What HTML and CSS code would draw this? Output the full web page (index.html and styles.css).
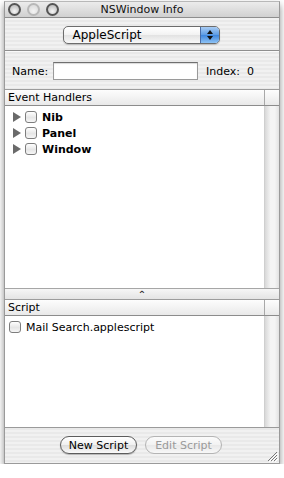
FILE: index.html
```html
<!DOCTYPE html>
<html lang="en">
<head>
    <meta charset="UTF-8">
    <title>NSWindow Info</title>
    <link rel="stylesheet" href="styles.css">
</head>
<body>
    <div class="window">
        <div class="titlebar">
            <div class="lights">
                <span class="light"></span>
                <span class="light off"></span>
                <span class="light"></span>
            </div>
            <div class="title">NSWindow Info</div>
        </div>

        <div class="content">
            <div class="popup-row">
                <div class="popup">
                    <span class="popup-label">AppleScript</span>
                    <span class="popup-arrows">
                        <svg width="8" height="12" viewBox="0 0 8 12">
                            <path d="M4 1 L7 5 L1 5 Z" fill="#111"/>
                            <path d="M4 11 L7 7 L1 7 Z" fill="#111"/>
                        </svg>
                    </span>
                </div>
            </div>
            <div class="separator"></div>

            <div class="name-row">
                <label class="name-label">Name:</label>
                <input class="name-field" type="text">
                <span class="index-label">Index:&nbsp; 0</span>
            </div>

            <div class="table events">
                <div class="table-header">
                    <div class="col">Event Handlers</div>
                    <div class="col-corner"></div>
                </div>
                <div class="table-body">
                    <div class="rows">
                        <div class="row">
                            <span class="disclosure"></span>
                            <span class="checkbox"></span>
                            <span class="row-text bold">Nib</span>
                        </div>
                        <div class="row">
                            <span class="disclosure"></span>
                            <span class="checkbox"></span>
                            <span class="row-text bold">Panel</span>
                        </div>
                        <div class="row">
                            <span class="disclosure"></span>
                            <span class="checkbox"></span>
                            <span class="row-text bold">Window</span>
                        </div>
                    </div>
                    <div class="scroll-track"></div>
                </div>
            </div>

            <div class="splitter"><span class="splitter-dot">&#8963;</span></div>

            <div class="table scripts">
                <div class="table-header">
                    <div class="col">Script</div>
                    <div class="col-corner"></div>
                </div>
                <div class="table-body">
                    <div class="rows">
                        <div class="row script-row">
                            <span class="checkbox"></span>
                            <span class="row-text">Mail Search.applescript</span>
                        </div>
                    </div>
                    <div class="scroll-track"></div>
                </div>
            </div>

            <div class="button-row">
                <button class="aqua-button">New Script</button>
                <button class="aqua-button disabled">Edit Script</button>
            </div>

            <svg class="grip" width="12" height="12" viewBox="0 0 12 12">
                <path d="M11 2 L2 11 M11 5 L5 11 M11 8 L8 11" stroke="#777" stroke-width="1"/>
                <path d="M12 3 L3 12 M12 6 L6 12 M12 9 L9 12" stroke="#fff" stroke-width="1"/>
            </svg>
        </div>
    </div>
</body>
</html>
```

FILE: styles.css
```css
body {
    margin: 0;
    padding: 0;
    background: #ffffff;
    font-family: 'DejaVu Sans', 'Liberation Sans', sans-serif;
    font-size: 11px;
    color: #000;
}

.window {
    margin: 1px 0 0 4px;
    width: 276px;
    height: 463px;
    box-sizing: border-box;
    border: 1px solid #9a9a9a;
    border-top-color: #b8b8b8;
    display: flex;
    flex-direction: column;
    box-shadow: 0 4px 7px rgba(0,0,0,0.45);
}

/* Title bar */
.titlebar {
    height: 15px;
    flex: none;
    display: flex;
    align-items: center;
    position: relative;
    background: linear-gradient(#ececec, #d0d0d0);
    border-bottom: 1px solid #8e8e8e;
}

.lights {
    display: flex;
    gap: 6px;
    padding-left: 3px;
    position: relative;
    z-index: 1;
}

.light {
    width: 13px;
    height: 13px;
    box-sizing: border-box;
    border-radius: 50%;
    border: 2px solid #555;
    background: radial-gradient(circle at 50% 70%, #f6f6f6, #b0b0b0);
}

.light.off {
    border-color: #b8b8b8;
    background: radial-gradient(circle at 50% 70%, #f4f4f4, #d6d6d6);
}

.title {
    position: absolute;
    left: 0;
    right: 0;
    text-align: center;
    font-size: 11px;
    color: #111;
}

/* Pinstripe body */
.content {
    flex: 1;
    display: flex;
    flex-direction: column;
    position: relative;
    background: repeating-linear-gradient(#f1f1f1 0px, #f1f1f1 2px, #e9e9e9 2px, #e9e9e9 4px);
}

.popup-row {
    display: flex;
    justify-content: center;
    padding-top: 8px;
    padding-right: 2px;
}

.popup {
    width: 157px;
    height: 18px;
    box-sizing: border-box;
    border: 1px solid #6c6c6c;
    border-radius: 5px;
    display: flex;
    overflow: hidden;
    background: linear-gradient(#ffffff, #f2f2f2 50%, #e2e2e2 51%, #f8f8f8);
    box-shadow: 0 1px 1px rgba(0,0,0,0.2);
}

.popup-label {
    flex: 1;
    padding-left: 9px;
    line-height: 16px;
    font-size: 12px;
}

.popup-arrows {
    width: 18px;
    display: flex;
    align-items: center;
    justify-content: center;
    border-left: 1px solid #4a6da6;
    background: linear-gradient(#a9ccf3, #5c9be4 50%, #3d85dd 51%, #8ec3f5);
}

.separator {
    margin-top: 6px;
    height: 1px;
    background: #8f8f8f;
    border-bottom: 1px solid #fafafa;
}

.name-row {
    display: flex;
    align-items: center;
    padding: 10px 0 0 7px;
    height: 18px;
}

.name-label {
    width: 41px;
}

.name-field {
    width: 145px;
    height: 18px;
    box-sizing: border-box;
    margin: 0;
    border: 1px solid #9a9a9a;
    border-top-color: #6f6f6f;
    background: #fff;
    box-shadow: inset 0 1px 1px rgba(0,0,0,0.15);
}

.index-label {
    margin-left: 8px;
}

/* Tables */
.table {
    display: flex;
    flex-direction: column;
    background: #fff;
    border-top: 1px solid #9c9c9c;
}

.events {
    margin-top: 9px;
    height: 198px;
}

.scripts {
    height: 127px;
}

.table-header {
    height: 15px;
    flex: none;
    display: flex;
    background: linear-gradient(#fdfdfd, #e9e9e9);
    border-bottom: 1px solid #8c8c8c;
}

.table-header .col {
    flex: 1;
    padding-left: 3px;
    line-height: 15px;
    border-right: 1px solid #a8a8a8;
}

.col-corner {
    width: 14px;
}

.table-body {
    flex: 1;
    display: flex;
}

.rows {
    flex: 1;
    padding-top: 3px;
}

.scroll-track {
    width: 14px;
    background: linear-gradient(90deg, #d8d8d8, #f4f4f4 40%, #f4f4f4 70%, #e2e2e2);
    border-left: 1px solid #cfcfcf;
}

.row {
    height: 16px;
    display: flex;
    align-items: center;
    padding-left: 8px;
}

.script-row {
    padding-left: 4px;
}

.disclosure {
    width: 0;
    height: 0;
    border-top: 5px solid transparent;
    border-bottom: 5px solid transparent;
    border-left: 8px solid #6a6a6a;
    margin-right: 4px;
}

.checkbox {
    width: 12px;
    height: 12px;
    box-sizing: border-box;
    border: 1px solid #7d7d7d;
    border-radius: 3px;
    background: linear-gradient(#ffffff, #e6e6e6 55%, #f6f6f6);
    margin-right: 5px;
}

.bold {
    font-weight: bold;
}

.splitter {
    height: 10px;
    flex: none;
    display: flex;
    justify-content: center;
    align-items: center;
    background: linear-gradient(#f6f6f6, #e4e4e4);
    border-top: 1px solid #a6a6a6;
    font-size: 10px;
    font-weight: bold;
    line-height: 10px;
    color: #333;
}

.splitter-dot {
    transform: translateY(1px);
}

/* Buttons */
.button-row {
    display: flex;
    justify-content: center;
    gap: 8px;
    padding-top: 8px;
    padding-right: 2px;
    border-top: 1px solid #9a9a9a;
}

.aqua-button {
    width: 77px;
    height: 18px;
    padding: 0;
    box-sizing: border-box;
    font-family: 'DejaVu Sans', 'Liberation Sans', sans-serif;
    font-size: 11px;
    color: #000;
    border: 1px solid #5c5c5c;
    border-radius: 9px;
    background: linear-gradient(#ffffff, #f0f0f0 50%, #dcdcdc 51%, #fafafa);
    box-shadow: 0 1px 1px rgba(0,0,0,0.25);
}

.aqua-button.disabled {
    color: #9a9a9a;
    border-color: #b4b4b4;
    background: linear-gradient(#fbfbfb, #f2f2f2 50%, #e8e8e8 51%, #f8f8f8);
    box-shadow: none;
}

.grip {
    position: absolute;
    right: 1px;
    bottom: 1px;
}
```
